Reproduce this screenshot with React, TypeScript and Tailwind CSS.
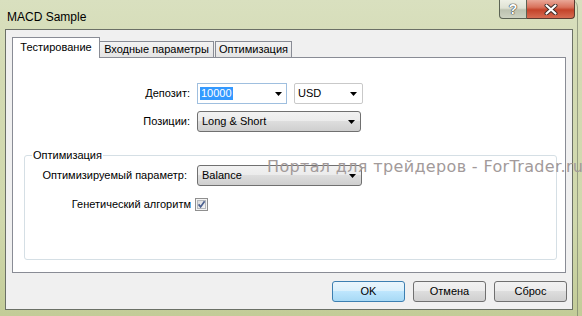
import React from "react";

function Arrow() {
  return (
    <svg width="7" height="4" viewBox="0 0 7 4" className="shrink-0">
      <path d="M0 0h7L3.5 4z" fill="#000" />
    </svg>
  );
}

function Check() {
  return (
    <svg width="13" height="13" viewBox="0 0 13 13" className="shrink-0">
      <defs>
        <linearGradient id="cbg" x1="0" y1="0" x2="1" y2="1">
          <stop offset="0" stopColor="#d9dadc" />
          <stop offset="1" stopColor="#f7f7f7" />
        </linearGradient>
      </defs>
      <rect x="0.5" y="0.5" width="12" height="12" fill="#f4f4f4" stroke="#8f8f8f" />
      <rect x="2.5" y="2.5" width="8" height="8" fill="url(#cbg)" stroke="#b6b9bd" />
      <path d="M3.6 6.4 L5.6 8.9 L9.6 3.3" fill="none" stroke="#4a5f8f" strokeWidth="1.7" />
    </svg>
  );
}

export default function App() {
  return (
    <div className="relative w-[582px] h-[316px] overflow-hidden bg-[linear-gradient(180deg,#d9e0bf_0%,#d3dab2_25%,#d0d8ac_70%,#c3cc98_100%)] font-['Liberation_Sans',sans-serif] text-[11px] leading-[13px] text-black">
      <div className="w-[578px] h-full border-r border-[#6e7763]/60 rounded-tr-[7px] flex flex-col">
        {/* title bar */}
        <div className="h-[29px] flex items-start shrink-0">
          <div className="pl-[7px] pt-[9px] text-[12px] leading-[16px] font-['Liberation_Sans',sans-serif] text-black">
            MACD Sample
          </div>
          <div className="ml-auto mr-[2px] flex">
            <div className="w-[28px] h-[19px] border border-t-0 border-[#5b6354] rounded-bl-[4px] bg-[linear-gradient(180deg,#eef0e6_0%,#dfe2d4_45%,#bcc2b0_55%,#cdd2c1_100%)] flex items-center justify-center">
              <span className="text-white font-bold text-[14px] leading-[14px] font-['Liberation_Sans',sans-serif] [text-shadow:0_0_1px_#333,0_0_1px_#333,0_0_1px_#333]">
                ?
              </span>
            </div>
            <div className="w-[48px] h-[19px] border border-t-0 border-l-0 border-[#5b3a30] rounded-br-[4px] bg-[linear-gradient(180deg,#e9a797_0%,#d9725c_40%,#c4432a_55%,#d66c52_100%)] flex items-center justify-center">
              <svg width="14" height="11" viewBox="0 0 14 11">
                <path d="M2.5 1.5 L11.5 9.5 M11.5 1.5 L2.5 9.5" stroke="#3b2a26" strokeWidth="4" strokeLinecap="round" fill="none" />
                <path d="M2.5 1.5 L11.5 9.5 M11.5 1.5 L2.5 9.5" stroke="#ffffff" strokeWidth="2.2" strokeLinecap="round" fill="none" />
              </svg>
            </div>
          </div>
        </div>

        {/* client area */}
        <div className="ml-[5px] mr-[4px] h-[281px] border border-[#6b7066] bg-[#f0f0f0] pl-[6px] pt-[7px] flex flex-col">
          {/* tabs */}
          <div className="relative z-10 flex items-end h-[21px]">
            <div className="w-[88px] h-[21px] border border-b-0 border-[#898c95] bg-white flex items-center justify-center pb-[2px]">
              Тестирование
            </div>
            <div className="w-[114px] h-[16px] mb-px border border-l-0 border-b-0 border-[#898c95] bg-[linear-gradient(180deg,#f3f3f3,#e4e4e4)] flex items-center justify-center">
              Входные параметры
            </div>
            <div className="ml-px w-[77px] h-[16px] mb-px border border-b-0 border-[#898c95] bg-[linear-gradient(180deg,#f3f3f3,#e4e4e4)] flex items-center justify-center">
              Оптимизация
            </div>
          </div>

          {/* panel */}
          <div className="relative -mt-px w-[554px] h-[216px] border border-[#898c95] bg-white flex flex-col">
            {/* deposit row */}
            <div className="mt-[25px] flex items-center h-[21px]">
              <div className="w-[177px] text-right">Депозит:</div>
              <div className="ml-[7px] w-[90px] h-[21px] border border-[#9fbfdf] bg-white flex items-center pl-[2px] pr-[4px]">
                <span className="bg-[#3399ff] text-white px-px">10000</span>
                <span className="ml-auto">
                  <Arrow />
                </span>
              </div>
              <div className="ml-[7px] w-[69px] h-[21px] border border-[#c9c9c9] rounded-[2px] bg-white flex items-center pl-[3px] pr-[5px]">
                <span>USD</span>
                <span className="ml-auto">
                  <Arrow />
                </span>
              </div>
            </div>

            {/* positions row */}
            <div className="mt-[7px] flex items-center h-[21px]">
              <div className="w-[177px] text-right">Позиции:</div>
              <div className="ml-[7px] w-[164px] h-[21px] border border-[#707070] rounded-[3px] bg-[linear-gradient(180deg,#f2f2f2_0%,#ebebeb_50%,#dddddd_50%,#cfcfcf_100%)] flex items-center pl-[4px] pr-[5px]">
                <span>Long &amp; Short</span>
                <span className="ml-auto">
                  <Arrow />
                </span>
              </div>
            </div>

            {/* group box */}
            <div className="relative mt-[23px] ml-[11px] w-[533px] h-[105px] border border-[#d5dfe5] rounded-[3px] flex flex-col">
              <span className="absolute -top-[7px] left-[7px] bg-white px-px leading-[13px]">
                Оптимизация
              </span>
              <div className="mt-[9px] flex items-center h-[21px]">
                <div className="w-[162px] text-right">Оптимизируемый параметр:</div>
                <div className="ml-[10px] w-[165px] h-[21px] border border-[#707070] rounded-[3px] bg-[linear-gradient(180deg,#f2f2f2_0%,#ebebeb_50%,#dddddd_50%,#cfcfcf_100%)] flex items-center pl-[4px] pr-[5px]">
                  <span>Balance</span>
                  <span className="ml-auto">
                    <Arrow />
                  </span>
                </div>
              </div>
              <div className="mt-[12px] flex items-center h-[13px]">
                <div className="w-[166px] text-right">Генетический алгоритм</div>
                <div className="ml-[4px]">
                  <Check />
                </div>
              </div>
            </div>
          </div>

          {/* buttons */}
          <div className="mt-[8px] flex justify-end gap-[8px] pr-[5px]">
            <div className="w-[73px] h-[21px] border border-[#3c7fb1] rounded-[3px] bg-[linear-gradient(180deg,#eaf6fd_0%,#d9f0fc_50%,#bee6fd_50%,#a7d9f5_100%)] flex items-center justify-center">
              OK
            </div>
            <div className="w-[73px] h-[21px] border border-[#707070] rounded-[3px] bg-[linear-gradient(180deg,#f2f2f2_0%,#ebebeb_50%,#dddddd_50%,#cfcfcf_100%)] flex items-center justify-center">
              Отмена
            </div>
            <div className="w-[73px] h-[21px] border border-[#707070] rounded-[3px] bg-[linear-gradient(180deg,#f2f2f2_0%,#ebebeb_50%,#dddddd_50%,#cfcfcf_100%)] flex items-center justify-center">
              Сброс
            </div>
          </div>
        </div>
      </div>

      {/* watermark */}
      <div className="absolute left-[267px] top-[158px] whitespace-nowrap text-[16px] leading-[18px] tracking-[0.35px] font-['DejaVu_Sans',sans-serif] text-[#a29a9a]">
        Портал для трейдеров - ForTrader.ru
      </div>
    </div>
  );
}
